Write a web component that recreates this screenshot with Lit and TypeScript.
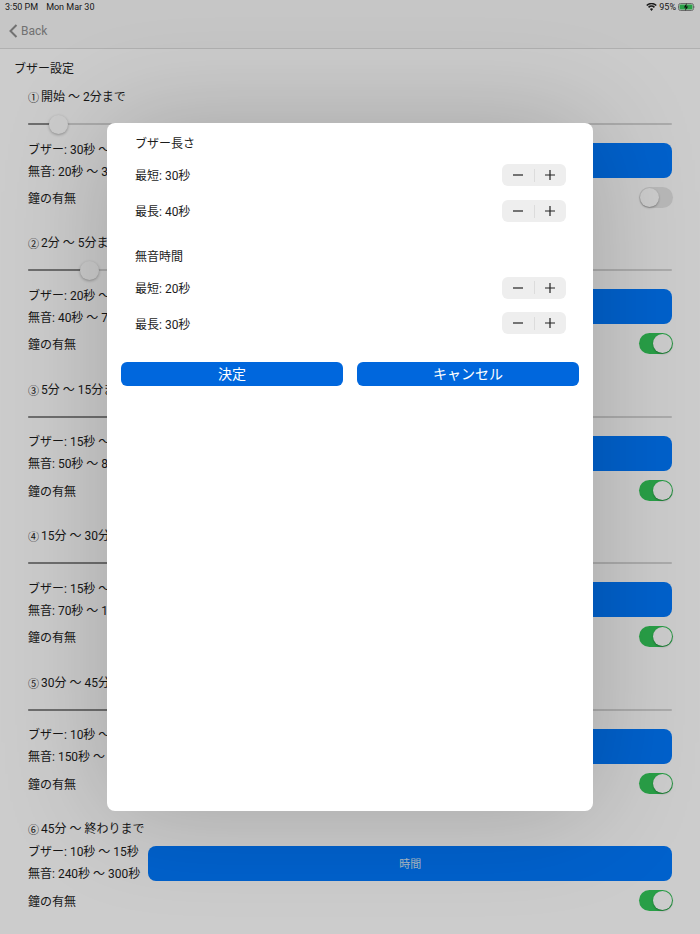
import { LitElement, html, css } from "lit";
import { customElement } from "lit/decorators.js";

interface Sec { num: string; title: string; buzz: string; mute: string; pct: number; on: boolean; slider: boolean; }
const SECS: Sec[] = [
  { num: "①", title: "開始 ～ 2分まで", buzz: "ブザー: 30秒 ～ 40秒", mute: "無音: 20秒 ～ 30秒", pct: 4.7, on: false, slider: true },
  { num: "②", title: "2分 ～ 5分まで", buzz: "ブザー: 20秒 ～ 30秒", mute: "無音: 40秒 ～ 70秒", pct: 9.5, on: true, slider: true },
  { num: "③", title: "5分 ～ 15分まで", buzz: "ブザー: 15秒 ～ 20秒", mute: "無音: 50秒 ～ 80秒", pct: 30, on: true, slider: true },
  { num: "④", title: "15分 ～ 30分まで", buzz: "ブザー: 15秒 ～ 20秒", mute: "無音: 70秒 ～ 110秒", pct: 50, on: true, slider: true },
  { num: "⑤", title: "30分 ～ 45分まで", buzz: "ブザー: 10秒 ～ 15秒", mute: "無音: 150秒 ～ 200秒", pct: 70, on: true, slider: true },
  { num: "⑥", title: "45分 ～ 終わりまで", buzz: "ブザー: 10秒 ～ 15秒", mute: "無音: 240秒 ～ 300秒", pct: 0, on: true, slider: false },
];

@customElement("app-root")
export class AppRoot extends LitElement {
  static styles = css`
    :host {
      display: block;
      width: 700px;
      height: 934px;
      position: relative;
      overflow: hidden;
      background: #fff;
      color: #1c1c1c;
      font-family: Roboto, "Noto Sans CJK JP", sans-serif;
      font-size: 12px;
    }
    .status {
      height: 14px;
      padding: 0 4px 0 5px;
      display: flex;
      align-items: center;
      justify-content: space-between;
      font-size: 9px;
      background: #f8f8f8;
    }
    .status .l { display: flex; gap: 8px; }
    .status .r { display: flex; align-items: center; gap: 2px; }
    .nav {
      height: 34px;
      background: #f8f8f8;
      border-bottom: 1px solid #dcdcdc;
      display: flex;
      align-items: center;
      gap: 3px;
      padding-left: 9px;
      color: #8e8e8e;
    }
    .nav svg { display: block; }
    .main { padding: 11px 28px 0 14px; }
    .head { height: 18px; line-height: 18px; margin-bottom: 9px; }
    .sec { padding-left: 14px; height: 146.4px; box-sizing: border-box; }
    .title { height: 20px; line-height: 20px; display: flex; align-items: center; gap: 2px; }
    .num { font-family: "Noto Sans CJK JP", sans-serif; font-size: 11px; }
    .slider { height: 34px; margin-bottom: 2px; display: flex; align-items: center; position: relative; }
    .spacer { height: 7px; }
    .track { flex: 1; height: 2px; border-radius: 1px; background: #d6d6d6; position: relative; }
    .fill { height: 100%; background: #8a8a8a; border-radius: 1px; }
    .thumb {
      position: absolute;
      top: 50%;
      width: 19px;
      height: 19px;
      margin: -9.5px 0 0 -9.5px;
      border-radius: 50%;
      background: #fff;
      box-shadow: 0 1px 3px rgba(0, 0, 0, 0.3);
    }
    .row { display: flex; gap: 8px; align-items: center; height: 35px; }
    .lines { display: flex; flex-direction: column; gap: 4px; min-width: 112px; white-space: nowrap; line-height: 18px; }
    .time {
      flex: 1;
      height: 35px;
      border: 0;
      padding: 0;
      border-radius: 8px;
      background: #007aff;
      color: #d8e6f5;
      font: inherit;
      font-size: 11px;
    }
    .bell { display: flex; align-items: center; justify-content: space-between; height: 21px; margin-top: 9px; }
    .sw { width: 34px; height: 21px; border-radius: 11px; background: #e6e6e6; position: relative; display: block; margin-right: -1px; }
    .sw.on { background: #34c759; }
    .knob {
      position: absolute;
      left: 1px;
      top: 1px;
      width: 19px;
      height: 19px;
      border-radius: 50%;
      background: #fff;
      box-shadow: 0 1px 2px rgba(0, 0, 0, 0.3);
    }
    .sw.on .knob { left: 14px; }
    .scrim { position: absolute; inset: 0; background: rgba(0, 0, 0, 0.2); }
    .modal {
      position: absolute;
      left: 107px;
      top: 123px;
      width: 486px;
      height: 688px;
      box-sizing: border-box;
      padding: 11px 14px 0;
      background: #fff;
      border-radius: 8px;
      box-shadow: 0 0 110px rgba(0, 0, 0, 0.2);
    }
    .m-head { height: 20px; line-height: 20px; padding-left: 14px; }
    .m-row {
      height: 35.6px;
      display: flex;
      align-items: center;
      justify-content: space-between;
      padding: 0 13px 0 14px;
    }
    .m-row.tall { height: 36px; }
    .m-row.tall .lbl { padding-bottom: 2px; }
    .m-head + .m-row { margin-top: 3px; }
    .gap { height: 18px; }
    .stepper {
      width: 64px;
      height: 22px;
      border-radius: 6px;
      background: #eeeeee;
      display: flex;
      align-items: center;
    }
    .stepper span { flex: 1; display: flex; justify-content: center; }
    .stepper i { width: 1px; height: 13px; background: #dcdcdc; }
    .stepper svg { display: block; }
    .actions { display: flex; gap: 14px; margin-top: 20.8px; }
    .actions button {
      flex: 1;
      height: 24px;
      border: 0;
      padding: 0;
      border-radius: 6px;
      background: #0067dd;
      color: #fff;
      font: inherit;
      font-size: 14px;
      line-height: 24px;
    }
  `;

  private minus() {
    return html`<svg width="10" height="10" viewBox="0 0 10 10"><path d="M0 5h10" stroke="#222" stroke-width="1.2"/></svg>`;
  }
  private plus() {
    return html`<svg width="10" height="10" viewBox="0 0 10 10"><path d="M0 5h10M5 0v10" stroke="#222" stroke-width="1.2"/></svg>`;
  }
  private mRow(label: string, tall = false) {
    return html`<div class="m-row ${tall ? "tall" : ""}"><span class="lbl">${label}</span>
      <div class="stepper"><span>${this.minus()}</span><i></i><span>${this.plus()}</span></div></div>`;
  }
  private sec(s: Sec) {
    return html`<div class="sec">
      <div class="title"><span class="num">${s.num}</span><span>${s.title}</span></div>
      ${s.slider
        ? html`<div class="slider"><div class="track">
            <div class="fill" style="width:${s.pct}%"></div>
            <div class="thumb" style="left:${s.pct}%"></div>
          </div></div>`
        : html`<div class="spacer"></div>`}
      <div class="row">
        <div class="lines"><span>${s.buzz}</span><span>${s.mute}</span></div>
        <button class="time">時間</button>
      </div>
      <div class="bell"><span>鐘の有無</span>
        <span class="sw ${s.on ? "on" : ""}"><span class="knob"></span></span>
      </div>
    </div>`;
  }

  render() {
    return html`
      <div class="status">
        <div class="l"><span>3:50 PM</span><span>Mon Mar 30</span></div>
        <div class="r">
          <svg width="11" height="8" viewBox="0 0 11 8"><path d="M5.5 8 3.9 6a2.4 2.4 0 0 1 3.2 0ZM3.1 5 2 3.8a5 5 0 0 1 7 0L7.900 5a3.500 3.500 0 0 0-4.800 0ZM1.300 3 .2 1.900a7.700 7.700 0 0 1 10.600 0L9.700 3a6.200 6.200 0 0 0-8.400 0Z" fill="#222"/></svg>
          <span>95%</span>
          <svg width="18" height="8" viewBox="0 0 18 8"><rect x=".5" y=".5" width="15" height="7" rx="2" fill="none" stroke="#888"/><rect x="1.500" y="1.500" width="13" height="5" rx="1" fill="#34c759"/><path d="M16.500 2.800c.6.200.6 2.200 0 2.400Z" fill="#888"/><path d="M8.800 0 5.800 4.400h2L7 8l3.200-4.600h-2Z" fill="#111"/></svg>
        </div>
      </div>
      <div class="nav">
        <svg width="9" height="14" viewBox="0 0 9 14"><path d="M7.500 1 1.500 7l6 6" fill="none" stroke="#8e8e8e" stroke-width="2"/></svg>
        <span>Back</span>
      </div>
      <div class="main">
        <div class="head">ブザー設定</div>
        ${SECS.map((s) => this.sec(s))}
      </div>
      <div class="scrim"></div>
      <div class="modal">
        <div class="m-head">ブザー長さ</div>
        ${this.mRow("最短: 30秒", true)}
        ${this.mRow("最長: 40秒", true)}
        <div class="gap"></div>
        <div class="m-head">無音時間</div>
        ${this.mRow("最短: 20秒")}
        ${this.mRow("最長: 30秒")}
        <div class="actions"><button>決定</button><button>キャンセル</button></div>
      </div>
    `;
  }
}
